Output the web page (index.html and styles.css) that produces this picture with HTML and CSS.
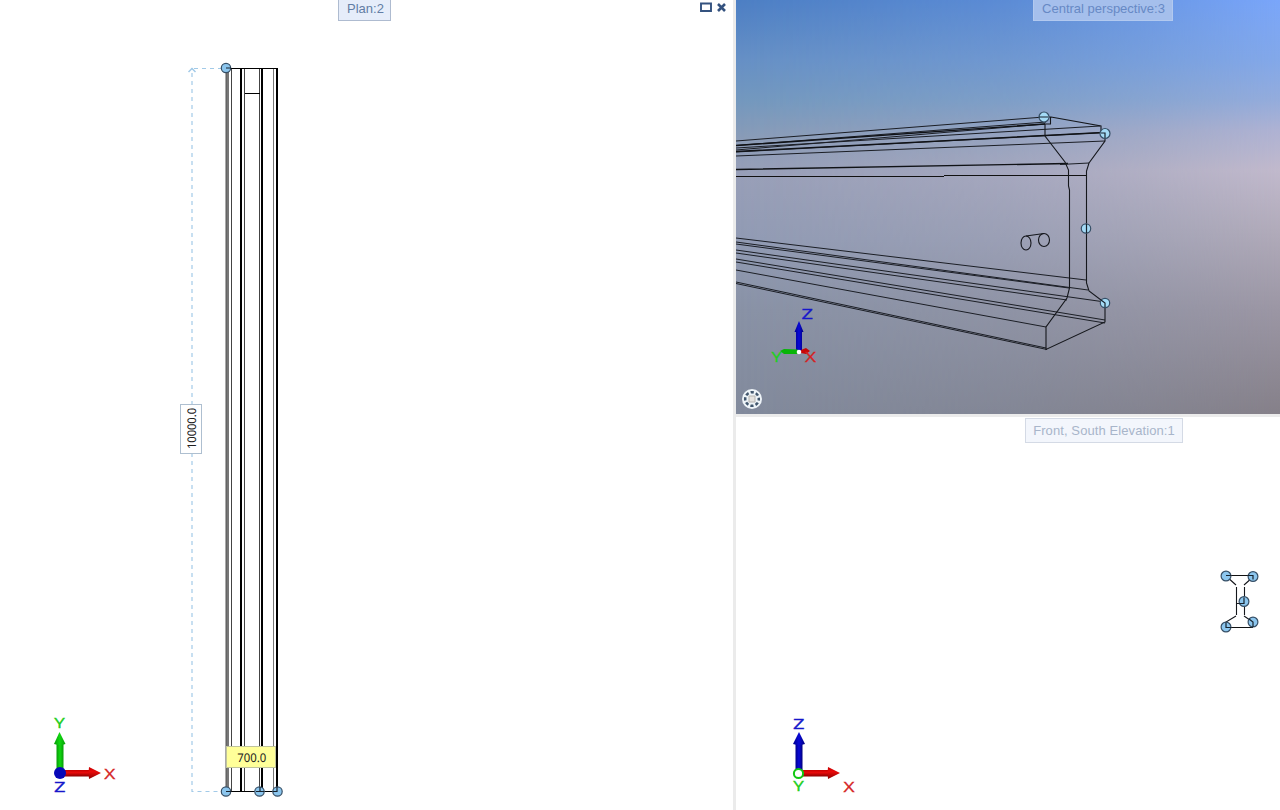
FILE: index.html
```html
<!DOCTYPE html>
<html lang="en">
<head>
<meta charset="utf-8">
<title>Viewports</title>
<link rel="stylesheet" href="styles.css">
</head>
<body>
<main class="workspace">
  <section class="view plan">
    <svg class="drawing" viewBox="0 0 733 810">
      <g class="dimension">
        <path d="M192 405V68M192 453V791.500H222M222 68.500H192"/>
        <path class="arrow" d="M188.500 72L192 68.500L195.500 72"/>
      </g>
      <g class="edges crisp">
        <path class="grey" d="M227.500 68V791"/>
        <path class="grey thin" d="M273.500 68V791"/>
        <path class="mid" d="M231.500 68V791M244.500 68V791M259.500 68V791"/>
        <path class="bold" d="M241 68V791M262 68V791M277 68V791"/>
        <path d="M226 68.500H278M245 93.500H260M226 791.500H278"/>
      </g>
      <path class="edge-dark" d="M226 68V791"/>
      <g class="node"><circle cx="226" cy="68" r="4.700"/><circle cx="226" cy="791.500" r="4.700"/><circle cx="259.500" cy="791.500" r="4.700"/><circle cx="277.500" cy="791.500" r="4.700"/></g>
      <path class="node-line" d="M226 68h5M226 791.500h5M256 791.500h8M273 791.500h4v-5M260 787v4"/>
      <defs>
        <linearGradient id="red" x2="0" y2="1"><stop stop-color="#c80000"/><stop offset=".4" stop-color="#e80a0a"/><stop offset="1" stop-color="#8c0000"/></linearGradient>
        <linearGradient id="green"><stop stop-color="#079b07"/><stop offset=".5" stop-color="#10d810"/><stop offset="1" stop-color="#079b07"/></linearGradient>
        <linearGradient id="blue"><stop stop-color="#00008c"/><stop offset=".5" stop-color="#0909d8"/><stop offset="1" stop-color="#00007c"/></linearGradient>
      </defs>
      <rect x="56.500" y="742" width="7" height="31" fill="url(#green)"/><path d="M54 744L59.500 732L65.500 744Q60 746 54 744Z" fill="url(#green)"/>
      <rect x="60" y="770" width="31" height="6.500" fill="url(#red)"/><path d="M89 767L101 773L89 779Q88 773 89 767Z" fill="url(#red)"/>
      <circle cx="60" cy="773" r="6" fill="#0707b8"/>
      <text class="axis y" x="59.500" y="728" textLength="10.500" lengthAdjust="spacingAndGlyphs">Y</text>
      <text class="axis x" x="109.700" y="778.500" textLength="11" lengthAdjust="spacingAndGlyphs">X</text>
      <text class="axis z" x="59.700" y="791.500" textLength="11.500" lengthAdjust="spacingAndGlyphs">Z</text>
      <rect class="length-box" x="180.500" y="404.500" width="21" height="49"/>
      <text class="dim-text" transform="translate(196.300 428.500) rotate(-90)" textLength="41" lengthAdjust="spacingAndGlyphs">10000.0</text>
      <rect class="width-box" x="226.500" y="746.500" width="49" height="21"/>
      <text class="dim-text" x="251.700" y="762" textLength="29" lengthAdjust="spacingAndGlyphs">700.0</text>
    </svg>
    <h2 class="label plan-label">Plan:2</h2>
    <svg class="controls" viewBox="0 0 28 12"><path d="M2 2.500h10v7.500H2z"/><path class="close" d="M19 3L26 10M26 3L19 10"/></svg>
  </section>
  <div class="right-column">
    <section class="view perspective">
      <svg class="drawing" viewBox="736 0 544 414">
        <g class="wire">
          <path d="M736 141L1044 117M736 145.500L1046 122M736 148L1100 126M736 150L1045 124M736 152L1104 132.500M736 156L1105 141"/>
          <path class="heavy" d="M736 145.500L1045 124M736 151.500L1104 132.500M736 169.500L1068 163.500"/>
          <path class="crisp" d="M736 176.500H896M944 175.500H1086M896 176H944"/>
          <path d="M1060 164.500L1089 163M736 238L1086 280M736 242L1088 290M736 244L1069 288M736 250L1105 302M736 253L1067 300M736 259L1105 320M736 262L1105 323M736 270L1046 327M736 282L1046 348M736 283.500L1047 349.500"/>
          <path class="frame" d="M1044 117H1051L1101 126V133M1050.500 117V124H1045V136L1065 162L1068.500 170V186L1069.500 190V288L1067 298L1046 327V349.500L1105 322V303L1089 291L1086.500 283V171L1089 163L1105 141V133"/>
          <g class="frame"><ellipse cx="1026" cy="243" rx="5" ry="7"/><ellipse cx="1044" cy="240" rx="5.500" ry="6.500"/><path d="M1026 236L1044 233.500"/></g>
        </g>
        <g class="node light"><circle cx="1044" cy="117" r="5"/><circle cx="1105" cy="133.500" r="5"/><circle cx="1086" cy="228.500" r="4.700"/><circle cx="1105" cy="303" r="4.700"/></g>
        <path class="node-line" d="M1039 117H1048M1101 133H1105V138M1086.500 224V233M1101 300L1105 303V307"/>
        <path d="M796 330H802V351H796ZM794.500 332L799 321L803.500 332Z" fill="url(#blue)"/>
        <path d="M798 349.500L784 349L780 351L784 354H798Z" fill="#08b508"/><path d="M801 350L806 348L810 351L806 354L801 353Z" fill="#c80505"/>
        <circle cx="799" cy="352" r="2.300" fill="#fff"/>
        <text class="axis z" x="807.200" y="318.500" textLength="11.500" lengthAdjust="spacingAndGlyphs">Z</text>
        <text class="axis y" x="776.500" y="361.500" textLength="10" lengthAdjust="spacingAndGlyphs">Y</text>
        <text class="axis x" x="810.500" y="361.500" textLength="11" lengthAdjust="spacingAndGlyphs">X</text>
        <circle cx="752" cy="399" r="10" fill="#eef4f8"/>
        <circle cx="752" cy="399" r="6.800" fill="none" stroke="#41566d" stroke-width="2.500" stroke-dasharray="3.200 2.140" stroke-dashoffset="1.600"/>
        <rect x="749" y="396" width="6" height="6" fill="#e4e2df" stroke="#b5b3b0"/>
      </svg>
      <h2 class="label perspective-label">Central perspective:3</h2>
    </section>
    <section class="view elevation">
      <svg class="drawing" viewBox="736 417 544 393">
        <g class="wire">
          <path class="frame" d="M1226 576L1236 585M1253 577L1244 585M1236.500 587V615M1244.500 587V615M1236 603.500H1244M1236 616L1226 622V627M1244 616L1253 622V627"/>
          <path class="heavy crisp" d="M1226 575.500H1253M1226 627.500H1253"/>
        </g>
        <g class="node"><circle cx="1226" cy="576" r="4.900"/><circle cx="1253" cy="576.500" r="4.900"/><circle cx="1244" cy="601.500" r="4.900"/><circle cx="1226" cy="627" r="4.900"/><circle cx="1253" cy="622" r="4.900"/></g>
        <path class="node-line" d="M1226 575.500h5M1248 575.500h5v4M1239 603.500h5v-6M1231 627.500h-5v-5M1253 627v-5l-4-3"/>
        <rect x="795.500" y="742" width="7" height="28" fill="url(#blue)"/><path d="M793 744L799 732L805 744Q799 746 793 744Z" fill="url(#blue)"/>
        <rect x="799" y="770" width="31" height="6.500" fill="url(#red)"/><path d="M828 767L840 773L828 779Q827 773 828 767Z" fill="url(#red)"/>
        <circle cx="798.500" cy="773.500" r="4.600" fill="#fff" stroke="#12c812" stroke-width="2"/>
        <text class="axis z" x="798.700" y="728.500" textLength="11.500" lengthAdjust="spacingAndGlyphs">Z</text>
        <text class="axis y" x="798.500" y="791" textLength="10.500" lengthAdjust="spacingAndGlyphs">Y</text>
        <text class="axis x" x="849" y="791.500" textLength="11" lengthAdjust="spacingAndGlyphs">X</text>
      </svg>
      <h2 class="label elevation-label">Front, South Elevation:1</h2>
    </section>
  </div>
</main>
</body>
</html>
```
FILE: styles.css
```css
* { box-sizing: border-box; }
body { margin: 0; font-family: "Liberation Sans", Arial, sans-serif; }
.workspace { display: grid; grid-template-columns: 733px 544px; column-gap: 3px; width: 1280px; height: 810px; background: #ebebeb; overflow: hidden; }
.right-column { display: grid; grid-template-rows: 414px 393px; row-gap: 3px; }
.view { position: relative; overflow: hidden; background: #fff; }
.drawing { display: block; position: relative; width: 100%; height: 100%; }
.perspective { background: linear-gradient(#4d7fc4, #6690c5 60px, #7398be 100px, #8b9cb7 140px, #989fb8 175px, #919bb4 240px, #8992a6 310px, #828a9c); }
.perspective::before { content: ""; position: absolute; inset: 0; background: linear-gradient(#7aa6fa, #83a8e9 60px, #94acdc 100px, #aeb2d3 130px, #c1b9cc 170px, #b1abba 230px, #9b96a4 310px, #858089); mask-image: linear-gradient(to right, transparent, rgba(0, 0, 0, .33) 50%, rgba(0, 0, 0, .62) 75%, #000); }
.label { position: absolute; margin: 0; font-size: 13px; font-weight: 400; line-height: 15px; text-align: center; white-space: nowrap; border: 1px solid #b7c0d0; }
.plan-label { left: 338px; top: -1px; width: 53px; height: 22px; padding: 1px 0 0 2px; color: #627da5; background: #e6edfa; border-color: #aebbd0; }
.perspective-label { left: 297px; top: -1px; width: 140px; height: 22px; padding: 1px 0 0 1px; color: #6789c5; background: #a5bfec; border-color: #b2c9ef; }
.elevation-label { left: 289px; top: 1px; width: 158px; height: 25px; padding-top: 4px; color: #a8b5ca; background: #f3f6fc; border-color: #d4dae5; letter-spacing: .09px; }
.controls { position: absolute; left: 699px; top: 1px; width: 28px; height: 12px; fill: none; stroke: #34527f; stroke-width: 1.9; }
.controls .close { stroke-width: 2.6; }
.dimension { fill: none; stroke: #a2cae8; stroke-width: 1.2; stroke-dasharray: 4 4; }
.dimension .arrow { stroke-dasharray: none; stroke-width: 1.5; }
.edges { fill: none; stroke: #000; stroke-width: 1; }
.edges .grey { stroke: #777; stroke-width: 3; }
.edges .thin { stroke-width: 1; }
.edges .mid { stroke: #444; stroke-width: 1; }
.edges .bold { stroke-width: 2; }
.crisp { shape-rendering: crispEdges; }
.edge-dark { stroke: #555; stroke-width: 1; }
.node { fill: #8cc6ee; stroke: #364f66; stroke-width: 1.2; }
.light { fill: #a4dbf6; }
.node-line { fill: none; stroke: #17232e; stroke-width: 1.2; }
.wire { fill: none; stroke: #1b1e25; stroke-width: 1; }
.wire .heavy { stroke: #101216; stroke-width: 1.4; }
.wire .crisp { stroke: #111; stroke-width: 1; }
.wire .frame { stroke: #15171c; stroke-width: 1.1; }
.axis { font: 14px "Open Sans", sans-serif; text-anchor: middle; stroke-width: .3; text-rendering: geometricPrecision; }
.x { fill: #d52222; stroke: #d52222; }
.y { fill: #20ce20; stroke: #20ce20; }
.z { fill: #1616ca; stroke: #1616ca; }
.length-box { fill: #fff; stroke: #aebfd0; }
.width-box { fill: #ffff99; stroke: #c0c49c; }
.dim-text { font: 12px "Noto Sans", sans-serif; fill: #202020; text-anchor: middle; text-rendering: geometricPrecision; }
```
